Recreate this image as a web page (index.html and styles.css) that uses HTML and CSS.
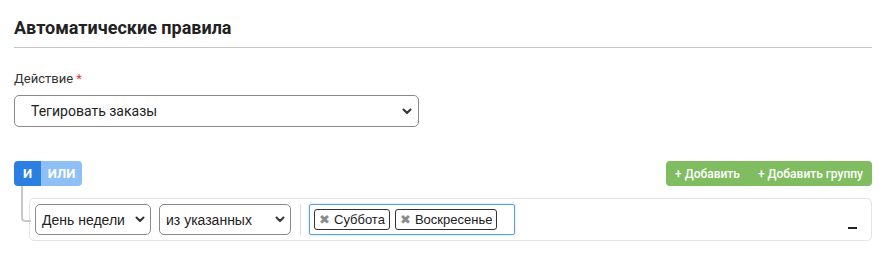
FILE: index.html
```html
<!DOCTYPE html>
<html>

<head>
  <meta charset="utf-8">
  <link rel="stylesheet" href="styles.css">
  <title>Автоматические правила</title>
</head>

<body>
  <div class="page">
    <h2 class="title">Автоматические правила</h2>

    <div class="field">
      <label class="label">Действие <span class="req">*</span></label>
      <div class="select select-main">
        <span>Тегировать заказы</span>
        <svg class="chev" width="10" height="7" viewBox="0 0 10 7"><path d="M1.5 1.5 L5 5 L8.5 1.5" fill="none" stroke="#333" stroke-width="2" stroke-linecap="round" stroke-linejoin="round"/></svg>
      </div>
    </div>

    <div class="group">
      <div class="group-header">
        <div class="btn-group">
          <button type="button" class="btn btn-and">И</button>
          <button type="button" class="btn btn-or">ИЛИ</button>
        </div>
        <div class="btn-group">
          <button type="button" class="btn btn-add">+ Добавить</button>
          <button type="button" class="btn btn-add">+ Добавить группу</button>
        </div>
      </div>

      <div class="rules">
        <div class="rule">
          <div class="select select-rule select-field">
            <span>День недели</span>
            <svg class="chev" width="10" height="7" viewBox="0 0 10 7"><path d="M1.5 1.5 L5 5 L8.5 1.5" fill="none" stroke="#333" stroke-width="2" stroke-linecap="round" stroke-linejoin="round"/></svg>
          </div>
          <div class="select select-rule select-op">
            <span>из указанных</span>
            <svg class="chev" width="10" height="7" viewBox="0 0 10 7"><path d="M1.5 1.5 L5 5 L8.5 1.5" fill="none" stroke="#333" stroke-width="2" stroke-linecap="round" stroke-linejoin="round"/></svg>
          </div>
          <div class="sep"></div>
          <div class="tags">
            <span class="tag"><span class="tag-x">✖</span>Суббота</span>
            <span class="tag"><span class="tag-x">✖</span>Воскресенье</span>
          </div>
          <span class="remove"></span>
        </div>
      </div>
    </div>
  </div>
</body>

</html>
```

FILE: styles.css
```css
html,
body {
  margin: 0;
  background: #ffffff;
  color: #222222;
  font-family: Roboto, "Liberation Sans", sans-serif;
}

.page {
  width: 858px;
  padding: 16px 14px 0 14px;
}

.title {
  margin: 0;
  font-size: 18px;
  font-weight: 700;
  line-height: 24px;
  padding-bottom: 7px;
  border-bottom: 1px solid #c4c4c4;
  color: #222222;
}

.field {
  margin-top: 22px;
}

.label {
  display: block;
  font-size: 13px;
  line-height: 18px;
  color: #333333;
  margin-bottom: 7px;
}

.req {
  color: #e03a3a;
}

.select {
  display: flex;
  align-items: center;
  justify-content: space-between;
  box-sizing: border-box;
  border: 1px solid #8a8a8a;
  border-radius: 5px;
  background: #ffffff;
  color: #222222;
}

.select-main {
  width: 405px;
  height: 32px;
  padding: 0 6px 0 16px;
  font-size: 14px;
}

.chev {
  display: block;
}

.group {
  margin-top: 34px;
}

.group-header {
  display: flex;
  justify-content: space-between;
  align-items: center;
}

.btn-group {
  display: flex;
}

.btn {
  border: none;
  height: 25px;
  margin: 0;
  color: #ffffff;
  font-family: Roboto, "Liberation Sans", sans-serif;
  font-weight: 700;
  cursor: pointer;
}

.btn-group .btn:first-child {
  border-radius: 4px 0 0 4px;
}

.btn-group .btn:last-child {
  border-radius: 0 4px 4px 0;
}

.btn-and {
  background: #2b7fe3;
  width: 27px;
  padding: 0;
  font-size: 13px;
}

.btn-or {
  background: #8ec0f6;
  width: 41px;
  padding: 0;
  font-size: 13px;
}

.btn-add {
  background: #80bc60;
  font-size: 12px;
  font-weight: 500;
  padding: 0 9px;
}

.rules {
  margin-top: 12px;
  padding-left: 15px;
}

.rule {
  position: relative;
  display: flex;
  align-items: center;
  height: 43px;
  box-sizing: border-box;
  padding: 0 14px 0 5px;
  border: 1px solid #e4e4e4;
  border-radius: 5px;
  background: #ffffff;
}

.rule::before {
  content: "";
  position: absolute;
  left: -9px;
  top: -13px;
  width: 8px;
  height: 34px;
  border-left: 2px solid #c9c9c9;
  border-bottom: 2px solid #c9c9c9;
  border-bottom-left-radius: 4px;
}

.select-rule {
  height: 31px;
  padding: 0 5px 0 6px;
  font-family: "Liberation Sans", Arial, sans-serif;
  font-size: 14px;
  margin-right: 8px;
}

.select-field {
  width: 116px;
}

.select-op {
  width: 132px;
}

.sep {
  width: 1px;
  height: 31px;
  background: #dddddd;
  margin: 0 8px 0 1px;
}

.tags {
  display: flex;
  align-items: center;
  gap: 5px;
  box-sizing: border-box;
  width: 206px;
  height: 31px;
  padding: 0 4px;
  border: 1px solid #5d9ee0;
  border-radius: 2px;
  box-shadow: 0 0 2px rgba(93, 158, 224, 0.6);
}

.tag {
  display: inline-flex;
  align-items: center;
  height: 21px;
  box-sizing: border-box;
  padding: 0 4px;
  border: 1px solid #333333;
  border-radius: 3px;
  font-family: "Liberation Sans", Arial, sans-serif;
  font-size: 13px;
  color: #222222;
}

.tag-x {
  color: #8a8a8a;
  font-size: 13px;
  margin-right: 4px;
}

.remove {
  margin-left: auto;
  width: 9px;
  height: 2px;
  background: #222222;
  margin-top: 16px;
}
```
